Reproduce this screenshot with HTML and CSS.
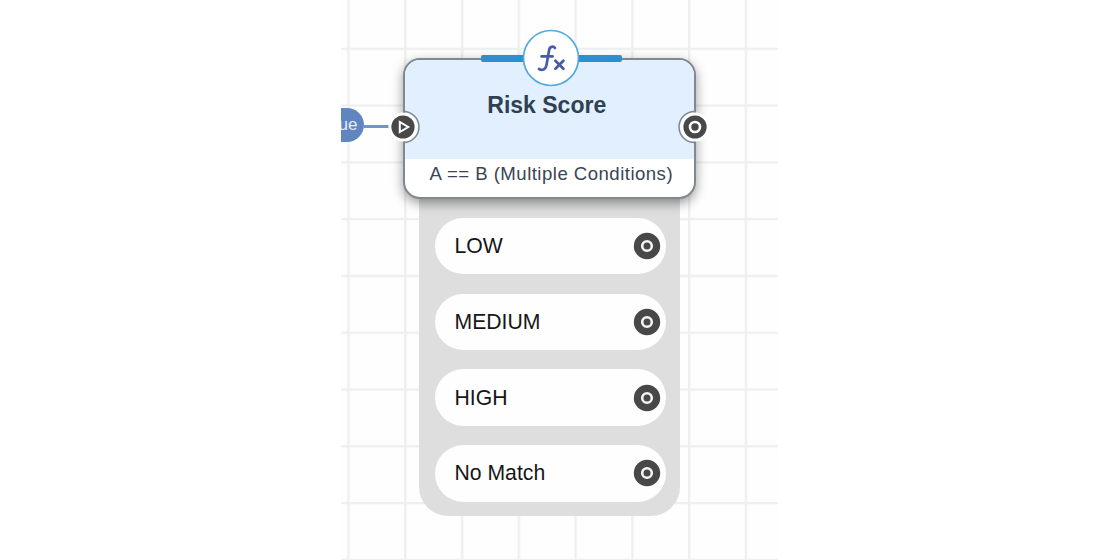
FILE: index.html
```html
<!DOCTYPE html>
<html lang="en">
<head>
<meta charset="utf-8">
<title>Risk Score</title>
<link rel="stylesheet" href="styles.css">
</head>
<body>
<svg class="defs" width="0" height="0">
  <symbol id="target" viewBox="0 0 28 28">
    <circle cx="14" cy="14" r="13.2" fill="#484848"/>
    <circle cx="14" cy="14" r="4.8" fill="none" stroke="#f4f4f4" stroke-width="2.6"/>
  </symbol>
</svg>
<main class="canvas">
  <svg class="grid" width="437" height="560">
    <defs>
      <pattern id="cells" x="6.3" y="47.7" width="56.78" height="56.78" patternUnits="userSpaceOnUse">
        <path d="M1.2 0V56.78M0 1.2H56.78" stroke="#000" stroke-opacity=".06" stroke-width="2.3"/>
      </pattern>
    </defs>
    <rect width="437" height="560" fill="url(#cells)"/>
  </svg>
  <div class="edge"><span class="edge-label">ue</span><span class="edge-line"></span></div>
  <section class="outcomes">
    <div class="outcome"><span>LOW</span><svg class="dot"><use href="#target"/></svg></div>
    <div class="outcome"><span>MEDIUM</span><svg class="dot"><use href="#target"/></svg></div>
    <div class="outcome"><span>HIGH</span><svg class="dot"><use href="#target"/></svg></div>
    <div class="outcome"><span>No Match</span><svg class="dot"><use href="#target"/></svg></div>
  </section>
  <section class="card">
    <h1 class="title">Risk Score</h1>
    <p class="condition">A == B (Multiple Conditions)</p>
  </section>
  <span class="accent"></span>
  <svg class="badge" viewBox="0 0 58 58">
    <circle cx="29" cy="29" r="27.5" fill="#fff" stroke="#55a9d8" stroke-width="1.7"/>
    <g fill="none" stroke="#4a5ba6" stroke-width="2.7" stroke-linecap="round" stroke-linejoin="round">
      <path d="M33 19C31.4 16.9 27.8 17.4 27.2 20.8L24.4 36.6C23.7 40.6 20 41.8 17 40"/>
      <path d="M19.6 27.4H30.6"/>
      <path d="M33.4 31.8L41.4 39.8M41.4 31.8L33.4 39.8"/>
    </g>
  </svg>
  <svg class="port port-in" viewBox="0 0 34 34">
    <circle cx="17" cy="17" r="14.6" fill="#fff"/>
    <path d="M17.5 1.5A15.5 15.5 0 0 1 17.5 32.5" fill="none" stroke="#808890" stroke-width="1.5"/>
    <circle cx="17" cy="17" r="11.6" fill="#484848"/>
    <path d="M13.8 12V22L22.2 17Z" fill="none" stroke="#fff" stroke-width="2"/>
  </svg>
  <svg class="port port-out" viewBox="0 0 34 34">
    <circle cx="17" cy="17" r="14.6" fill="#fff"/>
    <path d="M16.5 1.5A15.5 15.5 0 0 0 16.5 32.5" fill="none" stroke="#808890" stroke-width="1.5"/>
    <circle cx="17" cy="17" r="11.6" fill="#484848"/>
    <circle cx="17" cy="17" r="5" fill="none" stroke="#fff" stroke-width="2.6"/>
  </svg>
</main>
</body>
</html>
```
FILE: styles.css
```css
* {
  box-sizing: border-box;
}

body {
  margin: 0;
  background: #fff;
  font-family: "Liberation Sans", Arial, sans-serif;
}

.defs {
  position: absolute;
}

.canvas {
  position: relative;
  width: 437px;
  height: 560px;
  margin-left: 341px;
  overflow: hidden;
  background: #fefefe;
}

.grid {
  display: block;
}

.edge {
  position: absolute;
  left: 0;
  top: 108px;
  display: flex;
  align-items: center;
}

.edge-label {
  display: flex;
  justify-content: flex-end;
  width: 23px;
  height: 34px;
  padding-right: 6.5px;
  border-radius: 0 17px 17px 0;
  background: #6185c0;
  color: #e6edf8;
  font-size: 17px;
  line-height: 34px;
}

.edge-line {
  width: 25px;
  height: 3px;
  margin-top: 3px;
  background: #7494c9;
}

.outcomes {
  position: absolute;
  left: 78px;
  top: 180px;
  display: flex;
  flex-direction: column;
  gap: 19.2px;
  width: 261px;
  height: 336px;
  padding: 37.8px 14px 0 16px;
  border-radius: 0 0 29px 29px;
  background: #dedede;
}

.outcome {
  display: flex;
  flex: none;
  align-items: center;
  justify-content: space-between;
  height: 56.6px;
  padding: 0 5px 0 19.5px;
  border-radius: 29px;
  background: #fefefe;
  color: #161616;
  font-size: 21.2px;
}

.dot {
  width: 28px;
  height: 28px;
}

.card {
  position: absolute;
  left: 61.5px;
  top: 57.5px;
  width: 293.5px;
  height: 141.5px;
  overflow: hidden;
  border: 2px solid #808890;
  border-radius: 17px;
  background: #fff;
  box-shadow: 0 4px 12px rgba(0, 0, 0, 0.4);
  text-align: center;
}

.title {
  height: 99px;
  margin: 0;
  padding-top: 32px;
  padding-right: 5px;
  background: #e1efff;
  color: #2f4050;
  font-size: 23px;
  line-height: 26px;
}

.condition {
  margin: 0;
  padding-left: 4px;
  color: #394554;
  font-size: 18.6px;
  line-height: 29px;
  letter-spacing: 0.47px;
  white-space: nowrap;
}

.accent {
  position: absolute;
  left: 139.5px;
  top: 55px;
  width: 141px;
  height: 6.5px;
  border-radius: 2px;
  background: #2f8fcb;
}

.badge {
  position: absolute;
  left: 181px;
  top: 29.4px;
  width: 58px;
  height: 58px;
}

.port {
  position: absolute;
  top: 109.5px;
  width: 34px;
  height: 34px;
}

.port-in {
  left: 45px;
}

.port-out {
  left: 336.5px;
}
```
